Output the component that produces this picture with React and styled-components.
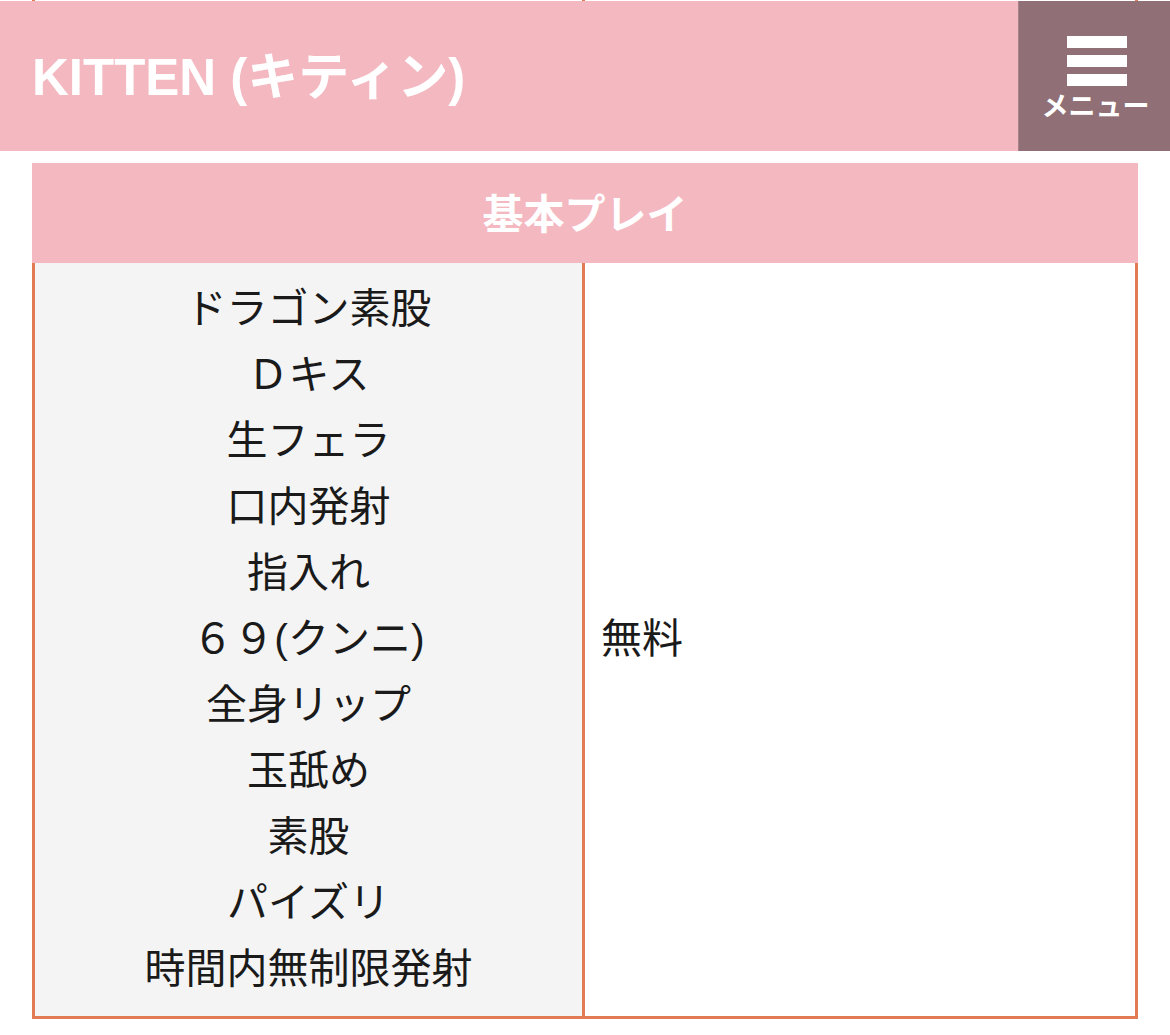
import React from 'react';
import styled, { createGlobalStyle } from 'styled-components';

const GlobalStyle = createGlobalStyle`
  body {
    margin: 0;
    background: #ffffff;
    font-family: "Liberation Sans", "Noto Sans CJK JP", sans-serif;
  }
`

const Page = styled.div`
  width: 1170px;
`

const PeekEdge = styled.div`
  display: grid;
  grid-template-columns: 1fr 1fr;
  margin: 0 32px;
  height: 1px;
  border-left: 3px solid #e27b54;
  border-right: 3px solid #e27b54;
  & > div:first-child {
    border-right: 3px solid #e27b54;
  }
`

const Header = styled.header`
  display: flex;
  height: 150px;
  background-color: #f4b8c1;
`

const Title = styled.h1`
  flex: 1;
  margin: 0;
  padding-left: 32px;
  display: flex;
  align-items: center;
  color: #ffffff;
  font-size: 51px;
  font-weight: 700;
  padding-bottom: 6px;
`

const MenuButton = styled.div`
  width: 152px;
  background-color: #907076;
  border-left: 1px solid #a88088;
  display: flex;
  flex-direction: column;
  align-items: center;
  padding-top: 35px;
  box-sizing: border-box;
  color: #ffffff;
`

const Bars = styled.div`
  display: flex;
  flex-direction: column;
  gap: 7px;
  margin-left: 4px;
`

const Bar = styled.span`
  display: block;
  width: 60px;
  height: 12px;
  background: #ffffff;
`

const MenuLabel = styled.span`
  margin-top: 4px;
  margin-left: 2px;
  font-family: "Noto Sans CJK JP", sans-serif;
  font-size: 27px;
  font-weight: 700;
  line-height: 30px;
  letter-spacing: 0;
`

const Table = styled.div`
  margin: 12px 32px 0;
`

const TableHead = styled.div`
  height: 100px;
  background-color: #f4b8c1;
  display: flex;
  align-items: center;
  justify-content: center;
  color: #ffffff;
  font-family: "Noto Sans CJK JP", sans-serif;
  font-size: 41px;
  font-weight: 700;
  padding-bottom: 4px;
  box-sizing: border-box;
`

const TableBody = styled.div`
  display: grid;
  grid-template-columns: 1fr 1fr;
  border: 3px solid #e27b54;
  border-top: none;
`

const Cell = styled.div`
  background-color: ${p => (p.$shaded ? '#f4f4f4' : '#ffffff')};
  border-right: ${p => (p.$shaded ? '3px solid #e27b54' : 'none')};
  padding: 13px 16px 14px;
  display: flex;
  flex-direction: column;
  justify-content: center;
  align-items: ${p => (p.$shaded ? 'center' : 'flex-start')};
  color: #1a1a1a;
  font-size: 41px;
  line-height: 66px;
`

const Line = styled.div``

const plays = [
  'ドラゴン素股',
  'Ｄキス',
  '生フェラ',
  '口内発射',
  '指入れ',
  '６９(クンニ)',
  '全身リップ',
  '玉舐め',
  '素股',
  'パイズリ',
  '時間内無制限発射',
];

export default function App() {
  return (
    <Page>
      <GlobalStyle />
      <PeekEdge>
        <div />
        <div />
      </PeekEdge>
      <Header>
        <Title>KITTEN (キティン)</Title>
        <MenuButton>
          <Bars>
            <Bar />
            <Bar />
            <Bar />
          </Bars>
          <MenuLabel>メニュー</MenuLabel>
        </MenuButton>
      </Header>
      <Table>
        <TableHead>基本プレイ</TableHead>
        <TableBody>
          <Cell $shaded>
            {plays.map(p => (
              <Line key={p}>{p}</Line>
            ))}
          </Cell>
          <Cell>無料</Cell>
        </TableBody>
      </Table>
    </Page>
  );
}
